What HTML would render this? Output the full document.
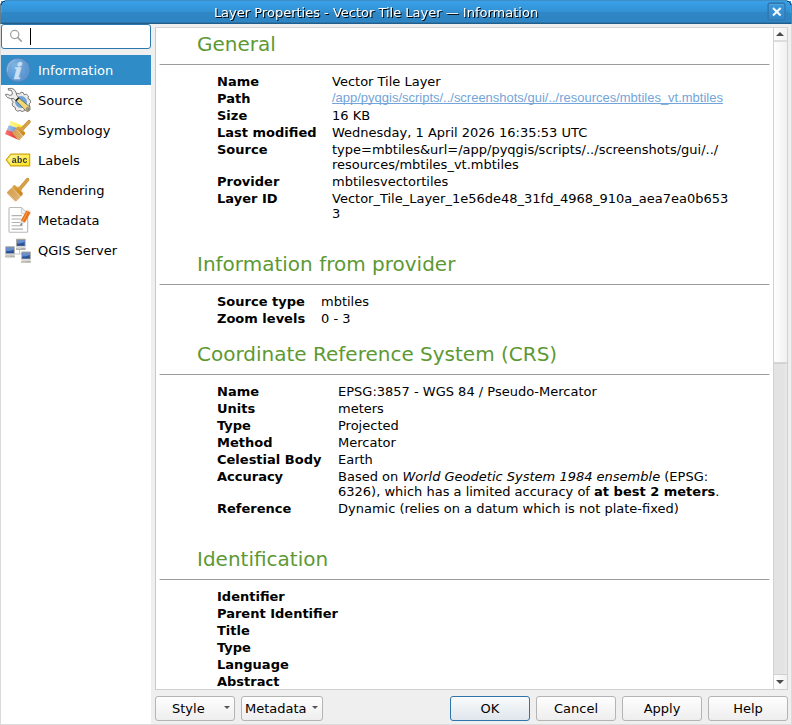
<!DOCTYPE html>
<html lang="en">
<head>
<meta charset="utf-8">
<title>Layer Properties - Vector Tile Layer — Information</title>
<style>
*{box-sizing:border-box;margin:0;padding:0}
html,body{width:792px;height:725px;overflow:hidden;background:#efefef}
body{position:relative;font-family:"DejaVu Sans","Liberation Sans",sans-serif;font-size:13px;line-height:15px;color:#000;-webkit-font-smoothing:antialiased}
.abs{position:absolute}
#win{position:absolute;left:0;top:0;width:792px;height:725px;background:#efefef;overflow:hidden}
/* title bar */
#title{position:absolute;left:0;top:0;width:792px;height:24px;background:linear-gradient(#3e8dc6 0px,#3e8dc6 1px,#39a1e8 1px,#3391d4 11.5px,#2f87c6 12px,#2e84c2 21px,#2e88c7 21px,#2e88c7 22px,#2b72a6 22px,#2b72a6 23px,#215f8e 23px,#215f8e 24px);}
#title .t{position:absolute;left:0;top:5px;width:752px;text-align:center;color:#fff;font-size:13px;line-height:15px;text-shadow:1px 1px 0 #000;white-space:nowrap;will-change:transform}
#close{position:absolute;left:762px;top:0;width:30px;height:26px}
#edgeL{position:absolute;left:0;top:24px;width:1px;height:701px;background:#dadada}
#edgeR{position:absolute;left:791px;top:24px;width:1px;height:701px;background:#dadada}
#edgeB{position:absolute;left:0;top:724px;width:792px;height:1px;background:#dcdcdc}
/* sidebar */
#search{position:absolute;left:1px;top:24px;width:150px;height:25px;background:#fff;border:1px solid #2b78ae;border-radius:3px}
#caret{position:absolute;left:30px;top:28px;width:1px;height:17px;background:#000}
#list{position:absolute;left:1px;top:55px;width:150px;height:669px;background:#fff}
.item{position:absolute;left:0;width:150px;height:30px}
.item .lbl{position:absolute;left:37px;top:8px;line-height:15px;white-space:nowrap}
.item svg{position:absolute;left:-1px;top:-1px;width:36px;height:33px;overflow:hidden}
.item.sel{background:#308cc6;color:#fff}
/* content */
#frame{position:absolute;left:155px;top:27px;width:633px;height:663px;background:#fff;border:1px solid #d0d0d0;border-left-color:#c8c8c8;border-top-color:#d6d6d6;overflow:hidden}
#view{position:absolute;left:0;top:0;width:617px;height:661px;overflow:hidden}
h1{position:absolute;left:41px;font-size:20px;font-weight:normal;line-height:24px;color:#5d9933;white-space:nowrap}
.hr{position:absolute;left:3px;width:611px;height:1px;background:linear-gradient(90deg,#d4d4d4 0,#d4d4d4 1px,#9c9c9c 1px,#9c9c9c 610px,#d4d4d4 610px)}
.k{position:absolute;left:61px;font-weight:bold;white-space:nowrap}
.v{position:absolute;white-space:nowrap}
a{letter-spacing:-0.01px;color:#74a5da;font-family:"Liberation Sans",sans-serif;text-decoration:underline;text-decoration-skip-ink:none;text-underline-offset:1px;position:relative;top:-1px}
/* scrollbar */
#sb{position:absolute;left:617px;top:0;width:15px;height:661px;background:linear-gradient(90deg,#d2d2d2 0,#d2d2d2 1px,#e3e3e3 1px,#e4e4e4 12px,#e8e8e8 12px,#e8e8e8 14px,#d0d0d0 14px)}
#sb .up,#sb .dn,#sb .sl{position:absolute;left:1px;width:13px;background:linear-gradient(90deg,#fefefe,#f1f1f1)}
#sb .up{top:0;height:12px;width:14px}
#sb .sl{top:12px;height:323px;width:13px;border-top:2px solid #dcdcdc;border-bottom:1px solid #d6d6d6;box-shadow:0 1px 0 #d2d2d2}
#sb .dn{top:646px;height:15px;border-top:1px solid #d0d0d0}
#sb svg{position:absolute;left:3px;width:8px;height:4px}
.btn .arr{position:absolute;top:9px;width:6px;height:3px}
.btn.def{border-color:#2f74aa;background:linear-gradient(#f9fbfc,#dfe6ec)}
/* buttons */
.btn{position:absolute;top:696px;height:25px;width:80px;border:1px solid #b4b4b4;border-radius:3px;background:linear-gradient(#fefefe,#eeeeee);text-align:center;line-height:23px;white-space:nowrap}
</style>
</head>
<body>
<div id="win">
  <div id="title"><div class="t">Layer Properties - Vector Tile Layer — Information</div><svg id="close" viewBox="0 0 30 26"><defs><linearGradient id="cg" x1="0" y1="0" x2="0" y2="1"><stop offset="0" stop-color="#3d9adb"/><stop offset="1" stop-color="#3087c7"/></linearGradient></defs><rect x="5.3" y="2.3" width="18.4" height="18.4" rx="3" fill="#3179b1"/><rect x="7" y="4" width="15.3" height="15.2" rx="1" fill="url(#cg)"/><rect x="7.6" y="4" width="14" height="1" fill="#4fa3de"/><path d="M11 8L18.6 15.6M18.6 8L11 15.6" stroke="#fff" stroke-opacity=".95" stroke-width="2.1" stroke-linecap="butt"/></svg></div>
  <svg class="abs" style="left:0;top:0" width="792" height="24" viewBox="0 0 792 24" shape-rendering="crispEdges"><rect x="0" y="0" width="4" height="1" fill="#fff"/><rect x="4" y="0" width="1" height="1" fill="#a9c9e2"/><rect x="0" y="1" width="1" height="2" fill="#fff"/><rect x="0" y="3" width="1" height="1" fill="#b9c6cf"/><rect x="1" y="1" width="2" height="1" fill="#2b90e0"/><rect x="1" y="2" width="1" height="1" fill="#2b90e0"/><rect x="3" y="1" width="2" height="1" fill="#1c4466"/><rect x="2" y="2" width="1" height="1" fill="#1c4466"/><rect x="1" y="3" width="1" height="2" fill="#1c4466"/><rect x="0" y="4" width="1" height="20" fill="#64808f"/><rect x="1" y="5" width="1" height="8" fill="#3ba1e8"/><rect x="788" y="0" width="4" height="1" fill="#fff"/><rect x="787" y="0" width="1" height="1" fill="#a9c9e2"/><rect x="791" y="1" width="1" height="2" fill="#fff"/><rect x="791" y="3" width="1" height="1" fill="#b9c6cf"/><rect x="789" y="1" width="2" height="1" fill="#2b90e0"/><rect x="790" y="2" width="1" height="1" fill="#2b90e0"/><rect x="787" y="1" width="2" height="1" fill="#1c4466"/><rect x="789" y="2" width="1" height="1" fill="#1c4466"/><rect x="790" y="3" width="1" height="2" fill="#1c4466"/><rect x="791" y="4" width="1" height="20" fill="#64808f"/><rect x="790" y="5" width="1" height="8" fill="#3ba1e8"/></svg><div id="edgeL"></div><div id="edgeR"></div><div id="edgeB"></div>

  <div id="search"><svg style="position:absolute;left:0;top:0" width="30" height="23" viewBox="0 0 30 23"><circle cx="12.7" cy="9.5" r="4.1" fill="none" stroke="#a0a0a0" stroke-width="1.25"/><path d="M15.8 12.6L19.3 16.1" stroke="#a0a0a0" stroke-width="1.6" stroke-linecap="round"/></svg></div><div id="caret"></div>
  <div id="list">
    <div class="item sel" style="top:0"><svg viewBox="0 0 791 725" preserveAspectRatio="none"><defs><radialGradient id="ig" cx="0.35" cy="0.3" r="0.8"><stop offset="0" stop-color="#7fb2e0"/><stop offset="0.6" stop-color="#5f9bd4"/><stop offset="1" stop-color="#588fcb"/></radialGradient></defs><circle cx="395" cy="352" r="266" fill="url(#ig)" stroke="#4a80ba" stroke-width="22"/><path d="M165 380A235 235 0 0 1 330 130" stroke="#9cc4e6" stroke-opacity=".6" stroke-width="22" fill="none" stroke-linecap="round"/><text x="0" y="0" transform="translate(386 546) skewX(-4)" text-anchor="middle" font-family="DejaVu Serif, Liberation Serif, serif" font-style="italic" font-weight="bold" font-size="490" fill="#c9e0f2" stroke="#c9e0f2" stroke-width="12">i</text></svg><span class="lbl">Information</span></div>
    <div class="item" style="top:30px"><svg viewBox="0 0 791 725" preserveAspectRatio="none"><g stroke="#585858" stroke-width="17" stroke-linejoin="round"><path id="gear" fill="#ececec" d="M460 180 L510 190 L530 235 L585 225 L625 265 L615 320 L660 345 L675 400 L640 440 L655 495 L620 540 L565 535 L540 585 L485 605 L440 580 L390 600 L340 565 L335 515 L285 490 L265 440 L290 395 L255 350 L270 300 L320 285 L335 230 L385 205 L430 220 Z"/><circle cx="462" cy="395" r="125" fill="#6ea3dc" stroke="#5a8fc8" stroke-width="10"/><path fill="#eef0ee" d="M180 100 Q250 80 310 120 Q360 170 370 250 L410 300 L350 365 L300 320 Q230 330 170 300 Q130 270 120 230 L170 225 Q210 270 260 240 Q290 200 250 140 L185 135 Z"/><path fill="#f0d875" d="M410 300 L660 510 Q675 560 640 590 Q600 615 570 590 L350 365 Z"/><path fill="#222" stroke="none" d="M400 290 L425 312 L362 378 L338 355 Z"/><ellipse cx="610" cy="548" rx="28" ry="36" fill="#9a9a9a" stroke="#555" stroke-width="10" transform="rotate(-40 610 548)"/></g></svg><span class="lbl">Source</span></div>
    <div class="item" style="top:60px"><svg viewBox="0 0 791 725" preserveAspectRatio="none"><defs><linearGradient id="sy" x1="0" y1="0" x2="1" y2="0"><stop offset="0" stop-color="#fff6a0"/><stop offset="1" stop-color="#ffe92a"/></linearGradient><linearGradient id="sb2" x1="0" y1="0" x2="1" y2="0"><stop offset="0" stop-color="#a8c4e8"/><stop offset="1" stop-color="#5b8fd6"/></linearGradient><linearGradient id="sr" x1="0" y1="0" x2="1" y2="0"><stop offset="0" stop-color="#f47a7a"/><stop offset="1" stop-color="#ee1c1c"/></linearGradient><linearGradient id="fer" x1="0" y1="0" x2="1" y2="1"><stop offset="0" stop-color="#dda850"/><stop offset="1" stop-color="#c97f0e"/></linearGradient><linearGradient id="bh" x1="0" y1="0" x2="1" y2="1"><stop offset="0" stop-color="#d9a050"/><stop offset="1" stop-color="#e6c088"/></linearGradient></defs><path d="M235 150 L510 262 L480 330 L195 245 Z" fill="url(#sy)"/><path d="M195 245 L420 320 L300 410 L150 345 Z" fill="url(#sb2)"/><path d="M150 345 L300 400 L430 575 L110 440 Z" fill="url(#sr)"/><path d="M470 350 L638 168" stroke="#b9842c" stroke-width="74" stroke-linecap="round" fill="none"/><path d="M470 350 L638 168" stroke="#d9a248" stroke-width="54" stroke-linecap="round" fill="none"/><path d="M372 283 Q398 262 428 286 L545 402 Q560 432 538 458 L512 482 L352 322 Z" fill="url(#fer)"/><path d="M420 300 L470 290 L520 340 L510 400 Z" fill="#d9a248"/><path d="M352 322 L512 482 L428 570 Q412 582 396 566 L266 420 Z" fill="url(#bh)"/><path d="M325 345L285 400M355 375L305 445M385 405L335 480M415 435L365 515M445 465L395 550M475 495L420 570M300 390L450 540M320 365L480 515M285 415L420 560" stroke="#c48a3a" stroke-width="11" fill="none" stroke-opacity=".6"/></svg><span class="lbl">Symbology</span></div>
    <div class="item" style="top:90px"><svg viewBox="0 0 791 725" preserveAspectRatio="none"><defs><linearGradient id="lg" x1="0" y1="0" x2="1" y2="1"><stop offset="0" stop-color="#fff5a8"/><stop offset="1" stop-color="#ffe414"/></linearGradient></defs><path d="M138 349 L238 221 L652 221 L652 481 L238 481 Z" fill="url(#lg)" stroke="#cfa80c" stroke-width="26" stroke-linejoin="round"/><text x="258" y="412" font-family="Liberation Sans, sans-serif" font-weight="bold" font-size="192" fill="#2e3436" textLength="346" lengthAdjust="spacing" style="will-change:transform">abc</text></svg><span class="lbl">Labels</span></div>
    <div class="item" style="top:120px"><svg viewBox="0 0 791 725" preserveAspectRatio="none"><defs><linearGradient id="fer2" x1="0" y1="0" x2="1" y2="1"><stop offset="0" stop-color="#dda850"/><stop offset="1" stop-color="#c97f0e"/></linearGradient><linearGradient id="rh" x1="0" y1="0" x2="1" y2="1"><stop offset="0" stop-color="#d9a050"/><stop offset="1" stop-color="#e8c48c"/></linearGradient></defs><path d="M440 322 L606 125" stroke="#b9842c" stroke-width="76" stroke-linecap="round" fill="none"/><path d="M440 322 L606 125" stroke="#d9a248" stroke-width="56" stroke-linecap="round" fill="none"/><path d="M290 250 Q315 232 342 255 L492 405 Q512 435 490 462 L460 492 L265 297 Z" fill="url(#fer2)"/><path d="M370 285 L430 275 L480 330 L470 390 Z" fill="#d9a248"/><path d="M265 297 L460 492 L355 600 Q340 612 325 598 L155 425 Q145 410 158 398 Z" fill="url(#rh)"/><path d="M240 320L180 385M270 350L210 420M300 380L240 455M330 410L270 490M360 440L300 525M390 470L330 560M420 500L355 590M200 360L400 560M230 330L430 530M175 395L370 590" stroke="#c48a3a" stroke-width="11" fill="none" stroke-opacity=".6"/></svg><span class="lbl">Rendering</span></div>
    <div class="item" style="top:150px"><svg viewBox="0 0 791 725" preserveAspectRatio="none"><path d="M225 78 L470 78 L608 215 L608 600 Q608 622 585 622 L225 622 Q198 622 198 598 L198 105 Q198 78 225 78 Z" fill="#fff" stroke="#b9b9b9" stroke-width="24" stroke-linejoin="round"/><path d="M470 78 L470 195 Q470 215 490 215 L608 215 Z" fill="#f0f0f0" stroke="#c4c4c4" stroke-width="18" stroke-linejoin="round"/><path d="M255 255H480M255 330H460M255 405H445M255 478H500M255 552H505" stroke="#b0b0b0" stroke-width="24" fill="none"/><path d="M585 140 L675 185 L545 410 L455 365 Z" fill="#e8731d"/><path d="M585 140 L610 122 Q650 125 680 160 L675 185 Z" fill="#f3e6e0"/><path d="M455 365 L545 410 L500 440 L445 475 Z" fill="#d9d9d9"/><path d="M462 425 L500 440 L440 482 Z" fill="#666"/><path d="M610 165 L500 380" stroke="#f59a3c" stroke-width="22" fill="none"/></svg><span class="lbl">Metadata</span></div>
    <div class="item" style="top:180px"><svg viewBox="0 0 791 725" preserveAspectRatio="none"><defs><linearGradient id="scr" x1="0" y1="0" x2="0" y2="1"><stop offset="0" stop-color="#4a74bc"/><stop offset="1" stop-color="#1f4792"/></linearGradient></defs><path d="M430 340 V450 M320 440 H470" stroke="#c8c8c8" stroke-width="22" fill="none"/><g transform="translate(353 102)"><rect x="0" y="0" width="210" height="190" rx="18" fill="#a5a59d"/><rect x="20" y="28" width="170" height="128" rx="8" fill="url(#scr)"/><path d="M20 36 Q20 28 28 28 H182 Q190 28 190 36 V70 Q110 115 20 105 Z" fill="#7a9bd4" fill-opacity=".75"/><rect x="5" y="165" width="200" height="22" fill="#ddd"/><rect x="-2" y="200" width="214" height="48" rx="14" fill="#b1b1a9"/><rect x="14" y="212" width="100" height="14" rx="6" fill="#d4d4cc"/></g><g transform="translate(115 268)"><rect x="0" y="0" width="210" height="190" rx="18" fill="#a5a59d"/><rect x="20" y="28" width="170" height="128" rx="8" fill="url(#scr)"/><path d="M20 36 Q20 28 28 28 H182 Q190 28 190 36 V70 Q110 115 20 105 Z" fill="#7a9bd4" fill-opacity=".75"/><rect x="5" y="165" width="200" height="22" fill="#ddd"/><rect x="-2" y="200" width="214" height="48" rx="14" fill="#b1b1a9"/><rect x="14" y="212" width="100" height="14" rx="6" fill="#d4d4cc"/></g><g transform="translate(467 385)"><rect x="0" y="0" width="210" height="190" rx="18" fill="#a5a59d"/><rect x="20" y="28" width="170" height="128" rx="8" fill="url(#scr)"/><path d="M20 36 Q20 28 28 28 H182 Q190 28 190 36 V70 Q110 115 20 105 Z" fill="#7a9bd4" fill-opacity=".75"/><rect x="5" y="165" width="200" height="22" fill="#ddd"/><rect x="-2" y="200" width="214" height="48" rx="14" fill="#b1b1a9"/><rect x="14" y="212" width="100" height="14" rx="6" fill="#d4d4cc"/></g></svg><span class="lbl">QGIS Server</span></div>
  </div>

  <div id="frame">
    <div id="view">
      <h1 style="top:4px">General</h1>
      <div class="hr" style="top:36px"></div>
      <div class="k" style="top:46px">Name</div><div class="v" style="left:176px;top:46px">Vector Tile Layer</div>
      <div class="k" style="top:63px">Path</div><div class="v" style="left:176px;top:63px"><a>/app/pyqgis/scripts/../screenshots/gui/../resources/mbtiles_vt.mbtiles</a></div>
      <div class="k" style="top:80px">Size</div><div class="v" style="left:176px;top:80px">16 KB</div>
      <div class="k" style="top:97px">Last modified</div><div class="v" style="left:176px;top:97px">Wednesday, 1 April 2026 16:35:53 UTC</div>
      <div class="k" style="top:114px">Source</div><div class="v" style="left:176px;top:114px">type=mbtiles&amp;url=/app/pyqgis/scripts/../screenshots/gui/../<br>resources/mbtiles_vt.mbtiles</div>
      <div class="k" style="top:146px">Provider</div><div class="v" style="left:176px;top:146px">mbtilesvectortiles</div>
      <div class="k" style="top:163px">Layer ID</div><div class="v" style="left:176px;top:163px">Vector_Tile_Layer_1e56de48_31fd_4968_910a_aea7ea0b653<br>3</div>

      <h1 style="top:224px">Information from provider</h1>
      <div class="hr" style="top:256px"></div>
      <div class="k" style="top:266px">Source type</div><div class="v" style="left:165px;top:266px">mbtiles</div>
      <div class="k" style="top:283px">Zoom levels</div><div class="v" style="left:165px;top:283px">0 - 3</div>

      <h1 style="top:314px">Coordinate Reference System (CRS)</h1>
      <div class="hr" style="top:346px"></div>
      <div class="k" style="top:356px">Name</div><div class="v" style="left:182px;top:356px">EPSG:3857 - WGS 84 / Pseudo-Mercator</div>
      <div class="k" style="top:373px">Units</div><div class="v" style="left:182px;top:373px">meters</div>
      <div class="k" style="top:390px">Type</div><div class="v" style="left:182px;top:390px">Projected</div>
      <div class="k" style="top:407px">Method</div><div class="v" style="left:182px;top:407px">Mercator</div>
      <div class="k" style="top:424px">Celestial Body</div><div class="v" style="left:182px;top:424px">Earth</div>
      <div class="k" style="top:441px">Accuracy</div><div class="v" style="left:182px;top:441px">Based on <i>World Geodetic System 1984 ensemble</i> (EPSG:<br>6326), which has a limited accuracy of <b>at best 2 meters</b>.</div>
      <div class="k" style="top:473px">Reference</div><div class="v" style="left:182px;top:473px">Dynamic (relies on a datum which is not plate-fixed)</div>

      <h1 style="top:519px">Identification</h1>
      <div class="hr" style="top:551px"></div>
      <div class="k" style="top:561px">Identifier</div>
      <div class="k" style="top:578px">Parent Identifier</div>
      <div class="k" style="top:595px">Title</div>
      <div class="k" style="top:612px">Type</div>
      <div class="k" style="top:629px">Language</div>
      <div class="k" style="top:646px">Abstract</div>
    </div>
    <div id="sb"><div class="up"></div><div class="sl"></div><div class="dn"></div>
      <svg style="top:4px" viewBox="0 0 8 4"><path d="M0 4L4 0L8 4Z" fill="#4b4b4b"/></svg>
      <svg style="top:652px" viewBox="0 0 8 4"><path d="M0 0L8 0L4 4Z" fill="#4b4b4b"/></svg></div>
  </div>

  <div class="btn" style="left:155px"><span style="position:absolute;left:16px">Style</span><svg class="arr" style="left:68px" viewBox="0 0 6 3"><path d="M0 0L6 0L3 3Z" fill="#555"/></svg></div>
  <div class="btn" style="left:241px;width:82px"><span style="position:absolute;left:3px">Metadata</span><svg class="arr" style="left:70px" viewBox="0 0 6 3"><path d="M0 0L6 0L3 3Z" fill="#555"/></svg></div>
  <div class="btn def" style="left:450px">OK</div>
  <div class="btn" style="left:536px">Cancel</div>
  <div class="btn" style="left:622px">Apply</div>
  <div class="btn" style="left:708px">Help</div>
</div>
</body>
</html>
